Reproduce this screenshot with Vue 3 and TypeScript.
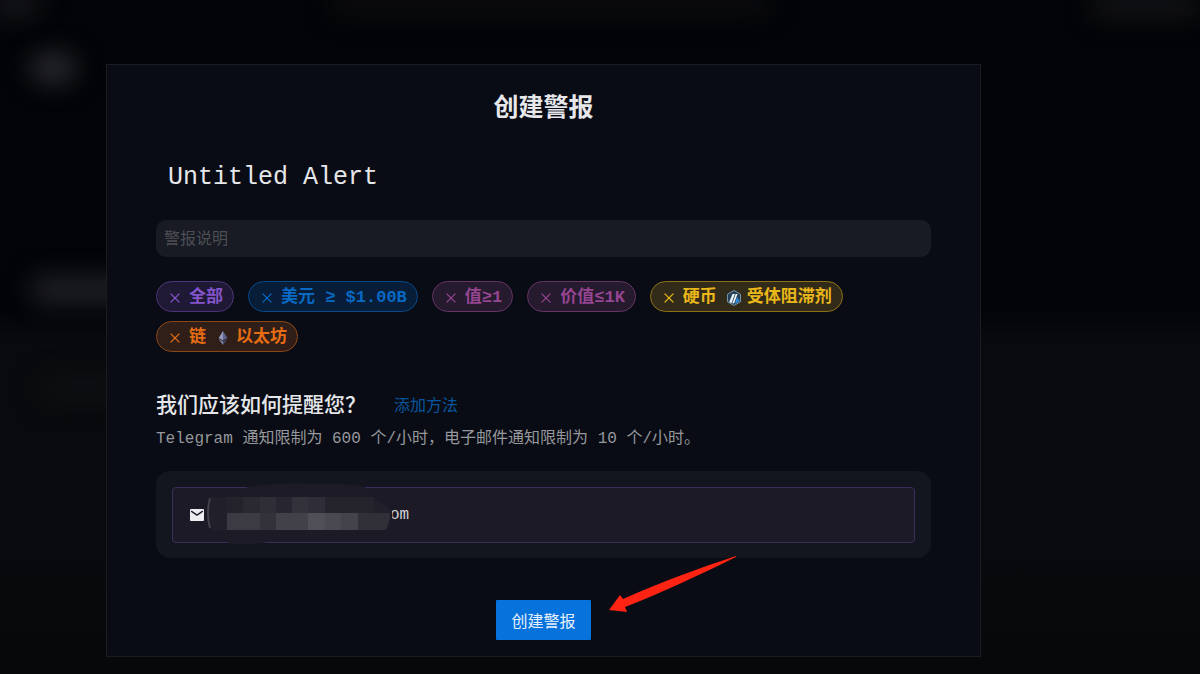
<script setup lang="ts">
import { ref } from 'vue'

interface Chip {
  id: string
  tone: string
  label: string
  icon?: 'coin' | 'ether'
  value?: string
}

const name = ref('Untitled Alert')
const description = ref('')
const chips = ref<Chip[]>([
  { id: 'all', tone: 'violet', label: '全部' },
  { id: 'usd', tone: 'blue', label: '美元 ≥ $1.00B' },
  { id: 'min', tone: 'plum', label: '值≥1' },
  { id: 'max', tone: 'plum', label: '价值≤1K' },
  { id: 'coin', tone: 'gold', label: '硬币', icon: 'coin', value: '受体阻滞剂' },
  { id: 'chain', tone: 'orange', label: '链', icon: 'ether', value: '以太坊' },
])

// x, y, width, height, fill
const tiles: [number, number, number, number, string][] = [
  [21, 14, 16, 16, '#24222b'],
  [37, 14, 17, 16, '#2a2831'],
  [54, 14, 16, 16, '#2f2d36'],
  [70, 14, 16, 16, '#272630'],
  [86, 14, 16, 16, '#33313a'],
  [102, 14, 17, 16, '#2f2d37'],
  [119, 14, 49, 16, '#25232c'],
  [21, 30, 33, 17, '#3c3a42'],
  [54, 30, 16, 17, '#33313a'],
  [70, 30, 32, 17, '#424048'],
  [102, 30, 17, 17, '#504e56'],
  [119, 30, 16, 17, '#4a4850'],
  [135, 30, 17, 17, '#44424a'],
  [152, 30, 32, 17, '#312f38'],
]

function removeChip(id: string) {
  chips.value = chips.value.filter((c) => c.id !== id)
}
</script>

<template>
  <div class="page">
    <div class="backdrop" aria-hidden="true">
      <i class="glow corner"></i>
      <i class="glow logo"></i>
      <i class="glow nav"></i>
      <i class="glow account"></i>
      <i class="glow heading"></i>
      <i class="glow row"></i>
    </div>
    <main class="dialog">
      <h1>创建警报</h1>
      <input v-model="name" class="name" type="text" aria-label="Untitled Alert" />
      <input v-model="description" class="description" type="text" placeholder="警报说明" aria-label="警报说明" />

      <div class="chips">
        <button v-for="chip in chips" :key="chip.id" type="button" class="chip" :class="chip.tone" @click="removeChip(chip.id)">
          <svg class="cross" viewBox="0 0 10 10" width="10" height="10">
            <path d="M.6.6 9.4 9.4M9.4.6.6 9.4" fill="none" stroke="currentColor" stroke-width="1.3" />
          </svg>
          <span>{{ chip.label }}</span>
          <svg v-if="chip.icon === 'coin'" class="token" viewBox="0 0 16 16" width="16" height="16">
            <path d="M8 .5 14.5 4.2v7.6L8 15.5 1.5 11.8V4.2Z" fill="#244157" stroke="#7893a8" stroke-width="1" />
            <path d="M6.5 4h2.4L5.5 13.2 3.2 12Z" fill="#e8f3fb" />
            <path d="M9.7 4h1.8L8.2 13.2 6.3 13.4Z" fill="#f4f8fb" />
            <path d="m11 7 2.6 4.3L9 14Z" fill="#2e8fe0" />
          </svg>
          <svg v-if="chip.icon === 'ether'" class="token" viewBox="0 0 16 16" width="16" height="16">
            <path d="M8 1v9.6L3.6 8Z" fill="#9299bd" />
            <path d="M8 1v9.6L12.4 8Z" fill="#5d6389" />
            <path d="M3.6 9 8 11.6V15Z" fill="#8188ad" />
            <path d="M12.4 9 8 11.6V15Z" fill="#464c70" />
          </svg>
          <span v-if="chip.value">{{ chip.value }}</span>
        </button>
      </div>

      <section class="notify">
        <div class="notify-head">
          <h2>我们应该如何提醒您？</h2>
          <a href="#">添加方法</a>
        </div>
        <p>Telegram 通知限制为 600 个/小时，电子邮件通知限制为 10 个/小时。</p>
        <div class="methods">
          <div class="method">
            <svg class="mail" viewBox="0 0 14 12" width="14" height="12">
              <rect width="14" height="12" rx="1" fill="#eeeef2" />
              <path d="m1.2 2.2 5.8 4 5.8-4" fill="none" stroke="#1c1a27" stroke-width="1.4" />
            </svg>
            <span class="hidden-part">
              <svg viewBox="0 0 190 62" width="190" height="62" aria-hidden="true">
                <path d="M24 10C45 0 85-1 116 1 148 0 165 4 170 11L184 24Q190 35 181 47L70 56Q62 62 24 61L4 45Q1 30 4 16Z" fill="#1d1b27" />
                <path d="M5 14H160Q178 18 184 28 184 40 180 47H5Q2 30 5 14Z" fill="#211f29" />
                <path d="M4 15Q0 30 4 45" fill="none" stroke="#42404a" stroke-width="2" />
                <rect v-for="(t, i) in tiles" :key="i" :x="t[0]" :y="t[1]" :width="t[2]" :height="t[3]" :fill="t[4]" />
                <path d="M185 28V48H179Q184 41 185 28Z" fill="#1d1b27" />
              </svg>
            </span>
            <span>om</span>
          </div>
        </div>
      </section>

      <div class="actions">
        <button type="button" class="submit">创建警报</button>
        <svg class="pointer" viewBox="0 0 128 56" width="128" height="56" aria-hidden="true">
          <path d="M127 0C90 12 50 27 14 43L11 39 0 54 18 56 16 51C55 36 92 18 127 1Z" fill="#ff2313" />
        </svg>
      </div>
    </main>
  </div>
</template>

<style>
body {
  margin: 0;
  background: #030407;
}
</style>

<style scoped>
.page {
  position: relative;
  box-sizing: border-box;
  min-height: 100vh;
  padding: 64px 219px 16px 106px;
  overflow: hidden;
  background: linear-gradient(#030407 0, #030408 310px, #090a0d 340px, #090a0d 560px, #07080a 100%);
  color: #e6e7ea;
  font: 16px/24px "Liberation Mono", "Noto Sans CJK SC", monospace;
}

.page *,
.page *::before {
  box-sizing: border-box;
}

.backdrop {
  position: absolute;
  inset: 0;
}

.glow {
  position: absolute;
  border-radius: 16px;
  filter: blur(12px);
}

.corner { left: -8px; top: -10px; width: 48px; height: 28px; background: #15161a; }
.logo { left: 30px; top: 52px; width: 46px; height: 32px; background: #26272b; }
.nav { left: 330px; top: -8px; width: 440px; height: 22px; background: #0c0d10; }
.account { right: 0; top: -6px; width: 110px; height: 24px; background: #131417; }
.heading { left: 30px; top: 276px; width: 110px; height: 28px; background: #1e1f23; }
.row { left: 40px; top: 376px; width: 90px; height: 26px; background: #0f1013; }

.dialog {
  position: relative;
  display: flex;
  flex-direction: column;
  padding: 26px 49px 16px;
  border: 1px solid #191c23;
  background: #090c14;
}

h1,
h2,
p {
  margin: 0;
}

h1 {
  font-size: 25px;
  line-height: 38px;
  text-align: center;
}

input {
  width: 100%;
  border: 0;
  outline: 0;
  color: inherit;
  font: inherit;
}

.name {
  height: 40px;
  margin-top: 28px;
  padding: 0 12px;
  background: transparent;
  font-size: 25px;
}

.description {
  height: 37px;
  margin-top: 23px;
  padding: 2px 8px 0;
  border-radius: 10px;
  background: #181b23;
}

.description::placeholder {
  color: #4d4f55;
  opacity: 1;
}

.chips {
  display: flex;
  flex-wrap: wrap;
  gap: 9px 14px;
  margin-top: 24px;
}

.chip {
  display: flex;
  align-items: center;
  height: 31px;
  padding: 2px 10px 0 13px;
  border: 1px solid;
  border-radius: 16px;
  font: bold 17px/24px "Liberation Mono", "Noto Sans CJK SC", monospace;
  white-space: pre;
  cursor: pointer;
}

.cross {
  margin-right: 9px;
}

.token {
  margin: 0 5px 0 9px;
}

.violet { border-color: #4d3478; background: #201936; color: #8455ca; }
.blue { border-color: #07498a; background: #081e38; color: #0869c4; }
.plum { border-color: #653364; background: #251a2e; color: #954591; }
.gold { border-color: #8d7116; background: #332b19; color: #e9b719; }
.orange { border-color: #8a4715; background: #301e19; color: #e66d12; }

.notify {
  margin-top: 39px;
}

.notify-head {
  display: flex;
  align-items: center;
  gap: 28px;
}

h2 {
  font-size: 21px;
  font-weight: 500;
  line-height: 32px;
}

a {
  color: #07559f;
  text-decoration: none;
}

p {
  margin-top: 4px;
  color: #96989c;
}

.methods {
  margin-top: 20px;
  padding: 16px 16px 15px;
  border-radius: 14px;
  background: #13161e;
}

.method {
  display: flex;
  align-items: center;
  height: 56px;
  padding: 0 17px;
  border: 1px solid #3b2e5c;
  border-radius: 4px;
  background: #1c1a27;
  color: #d2d1d7;
}

.mail {
  margin-right: 2px;
}

.hidden-part {
  position: relative;
  width: 184px;
  height: 56px;
}

.hidden-part svg {
  position: absolute;
  left: 0;
  top: -4px;
}

.actions {
  position: relative;
  display: flex;
  justify-content: center;
  margin-top: 42px;
}

.submit {
  height: 40px;
  padding: 0 15px;
  border: 0;
  border-radius: 1px;
  background: #0672dc;
  color: #e6f1fc;
  font: 16px/24px "Noto Sans CJK SC", sans-serif;
  cursor: pointer;
}

.pointer {
  position: absolute;
  left: calc(50% + 65px);
  top: -44px;
}
</style>
